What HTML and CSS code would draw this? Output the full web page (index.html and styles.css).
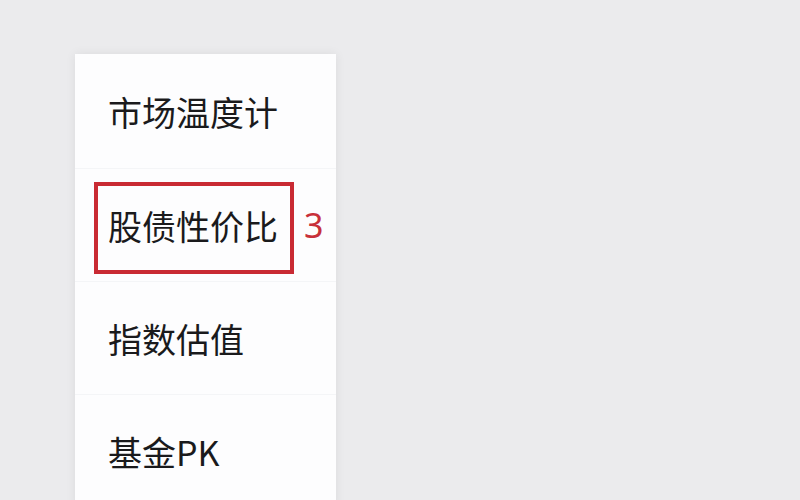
FILE: index.html
```html
<!DOCTYPE html>
<html lang="zh-CN">
<head>
<meta charset="utf-8">
<title>菜单</title>
<link rel="stylesheet" href="styles.css">
</head>
<body>
<div class="page">
  <ul class="menu">
    <li class="item first">市场温度计</li>
    <li class="item marked">股债性价比<span class="mark"></span><span class="mark-num">3</span></li>
    <li class="item">指数估值</li>
    <li class="item">基金PK</li>
  </ul>
</div>
</body>
</html>
```
FILE: styles.css
```css
html, body {
  margin: 0;
  padding: 0;
  height: 100%;
  overflow: hidden;
}
body {
  background: #ebebed;
  font-family: "Noto Sans CJK SC", "Noto Sans", sans-serif;
}
.page {
  padding: 54px 0 0 75px;
}
.menu {
  list-style: none;
  margin: 0;
  padding: 0;
  width: 261px;
  background: #fdfdfe;
  box-shadow: 0 0 10px rgba(0, 0, 0, 0.07);
}
.item {
  position: relative;
  height: 113px;
  display: flex;
  align-items: center;
  padding-left: 33px;
  font-size: 34px;
  color: #1a1a1c;
  border-bottom: 1px solid #f4f5f7;
  box-sizing: border-box;
}
.item.first {
  height: 115px;
}
.mark {
  position: absolute;
  left: 19px;
  top: 13px;
  width: 200px;
  height: 92px;
  border: 4px solid #c92a33;
  box-sizing: border-box;
}
.mark-num {
  position: absolute;
  left: 229px;
  top: 0;
  bottom: 0;
  display: flex;
  align-items: center;
  font-family: "Noto Sans", sans-serif;
  font-size: 34px;
  color: #c8313a;
}
```
